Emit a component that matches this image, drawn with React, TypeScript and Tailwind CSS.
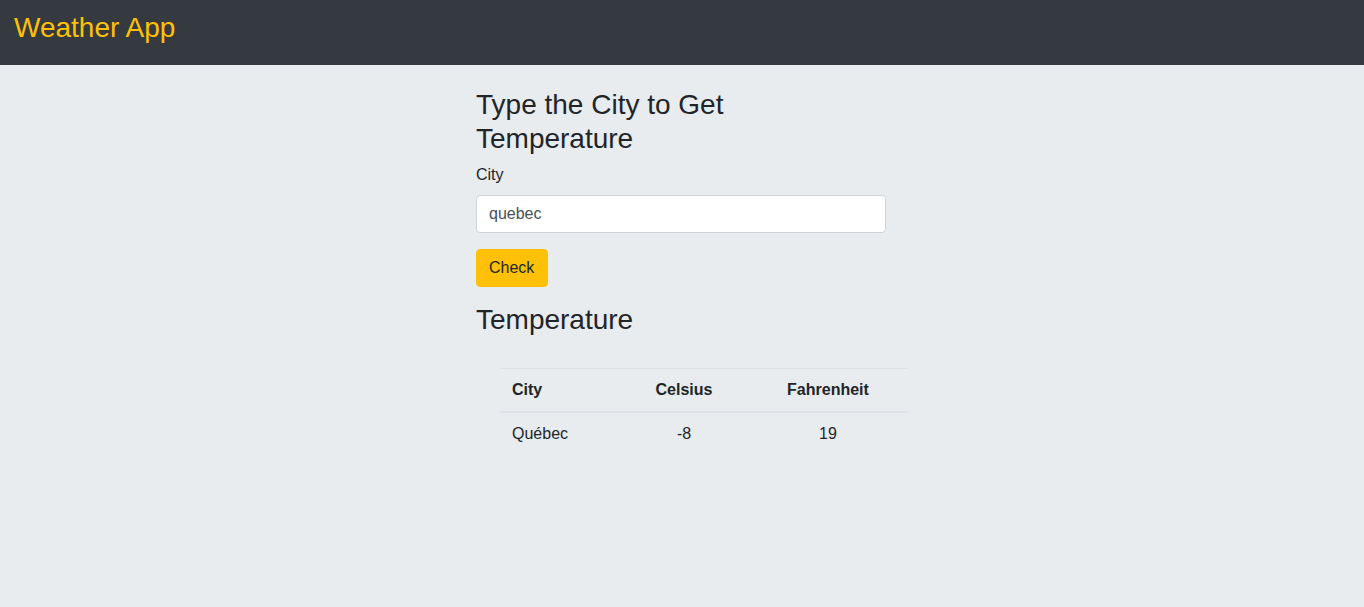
import React from "react";

export default function App() {
  return (
    <div className="min-h-[607px] bg-[#e8ecef] text-[#212529] font-['Liberation_Sans',Arial,sans-serif] text-[16px] leading-6">
      <nav className="h-[65px] bg-[#343a40] px-[14px] pt-[11px]">
        <div className="text-[28px] leading-[1.2] text-[#ffc107]">Weather App</div>
      </nav>
      <main className="mx-auto w-[410px] pt-[23px] translate-x-[-1px]">
        <h3 className="text-[28px] leading-[1.2] font-normal mb-2">Type the City to Get Temperature</h3>
        <label className="block mb-2 pt-[0px]">City</label>
        <input
          defaultValue="quebec"
          className="block w-full h-[38px] px-3 bg-white border border-[#ced4da] rounded text-[#495057] outline-none"
        />
        <button className="mt-4 h-[38px] w-[72px] px-3 bg-[#ffc107] border border-[#ffc107] rounded text-[#212529] text-left">Check</button>
        <h3 className="mt-[16px] text-[28px] leading-[1.2] font-normal">Temperature</h3>
        <table className="mt-[31px] ml-[24px] w-[408px] border-collapse">
          <colgroup>
            <col className="w-[120px]" />
            <col className="w-[128px]" />
            <col className="w-[160px]" />
          </colgroup>
          <thead>
            <tr className="border-t border-[#dee2e6]">
              <th className="px-3 py-[9px] text-left font-bold border-b-2 border-[#dee2e6]">City</th>
              <th className="px-3 py-[9px] text-center font-bold border-b-2 border-[#dee2e6]">Celsius</th>
              <th className="px-3 py-[9px] text-center font-bold border-b-2 border-[#dee2e6]">Fahrenheit</th>
            </tr>
          </thead>
          <tbody>
            <tr>
              <td className="px-3 py-[9px] text-left">Québec</td>
              <td className="px-3 py-[9px] text-center">-8</td>
              <td className="px-3 py-[9px] text-center">19</td>
            </tr>
          </tbody>
        </table>
      </main>
    </div>
  );
}
